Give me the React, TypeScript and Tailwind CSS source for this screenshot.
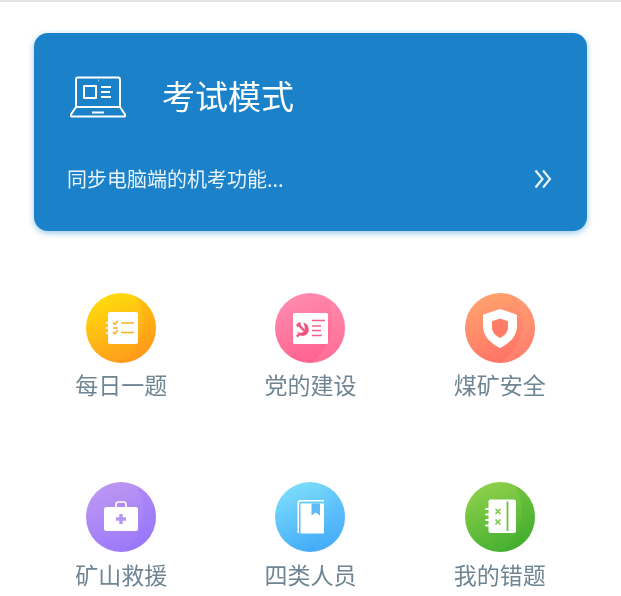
import type { ReactNode } from 'react'

const FONT = "font-['Noto_Sans_CJK_SC','Noto_Sans',sans-serif]"

function Disc({ id, from, to, sheen, children }: { id: string; from: string; to: string; sheen: string; children: ReactNode }) {
  return (
    <svg width="70" height="70" viewBox="0 0 70 70">
      <defs>
        <linearGradient id={id} x1="0.3" y1="0" x2="0.7" y2="1">
          <stop offset="0" stopColor={from} />
          <stop offset="1" stopColor={to} />
        </linearGradient>
      </defs>
      <circle cx="35" cy="35" r="35" fill={`url(#${id})`} />
      {/* the soft swoosh on the lower right of each disc */}
      <path d="M50 3.400A35 35 0 0 1 34 70C52 62 66 30 50 3.400Z" fill={sheen} opacity="0.2" />
      {children}
    </svg>
  )
}

const ITEMS: { label: string; icon: ReactNode }[] = [
  {
    label: '每日一题',
    icon: (
      <Disc id="d1" from="#FFDD0C" to="#FF981C" sheen="#FF8C12">
        <rect x="22" y="19" width="30" height="32" rx="2" fill="#fff" />
        <path d="M20 30h3M20 35h3M20 40h3" stroke="#fff" strokeWidth="1.500" />
        <g stroke="#FFB21A" strokeWidth="1.500" fill="none">
          <path d="M27 29.500l1.800 1.800 3-3.600M27 39l1.800 1.800 3-3.600" />
          <path d="M35 30h13M35 39.500h13M27 35h5" />
        </g>
      </Disc>
    ),
  },
  {
    label: '党的建设',
    icon: (
      <Disc id="d2" from="#FF8CB0" to="#FF5F8C" sheen="#FFA8C0">
        <rect x="18" y="20" width="35" height="31" rx="1.500" fill="#fff" />
        <path d="M37 27.500h13M37 33h9M37 37.500h9M37 42.500h10" stroke="#F4608A" strokeWidth="1.600" fill="none" />
        <g fill="#F0527C">
          {/* sickle */}
          <path d="M28 29.500c4.500 1 6.500 5.500 5.500 9-1 3.500-5 5.500-8.500 3.800l-2.300 2.200-1.700-1.700 2.300-2.300c-.7-.8-1-1.500-1.200-2.300 1.500 1.500 4 2.200 6 .8 2.500-1.800 2-6.500-.1-9.500Z" />
          {/* hammer */}
          <path d="M21 32l3.300-3 2 1.800-1 1 4.800 5.200-1.700 1.600-4.800-5.200-1 .9Z" />
        </g>
      </Disc>
    ),
  },
  {
    label: '煤矿安全',
    icon: (
      <Disc id="d3" from="#FFA36E" to="#FF6F66" sheen="#FFB98C">
        <path d="M35 16.500l16.500 5.500v11c0 10-7 17-16.500 21.500-9.500-4.500-16.500-11.500-16.500-21.500V22Z" fill="#fff" strokeLinejoin="round" stroke="#fff" strokeWidth="1" />
        <path d="M35 25.500l8 2.800v6c0 5-3.400 8.500-8 10.700-4.600-2.200-8-5.700-8-10.700v-6Z" fill="#FF7D68" />
      </Disc>
    ),
  },
  {
    label: '矿山救援',
    icon: (
      <Disc id="d4" from="#BD97F2" to="#9A78FA" sheen="#8E6CFF">
        <path d="M30 25v-2.500a2.500 2.500 0 0 1 2.500-2.500h5a2.500 2.500 0 0 1 2.500 2.500V25" fill="none" stroke="#fff" strokeWidth="1.600" />
        <rect x="18" y="25" width="34" height="24" rx="2.500" fill="#fff" />
        <path d="M35 32v10M30 37h10" stroke="#B496F5" strokeWidth="3.400" />
      </Disc>
    ),
  },
  {
    label: '四类人员',
    icon: (
      <Disc id="d5" from="#7EDDFB" to="#3FA8F8" sheen="#5DB8FA">
        <path d="M22.500 21a3 3 0 0 1 3-3H49v1.500H25.500a1.500 1.500 0 0 0-1.500 1.500V51h-1.500Z" fill="#fff" />
        <path d="M25.500 21.500H49V51.500H25.500Z" fill="#fff" />
        <path d="M36.500 21.500h8.500v12l-4.250-3-4.250 3Z" fill="#5DBBF8" />
      </Disc>
    ),
  },
  {
    label: '我的错题',
    icon: (
      <Disc id="d6" from="#8FD14C" to="#42AE2F" sheen="#3DA52A">
        <rect x="23.500" y="17.500" width="27.500" height="33.500" rx="2" fill="#fff" />
        <path d="M21 27h5M21 32.500h5M21 38h5M21 43.500h5" stroke="#fff" strokeWidth="1.800" strokeLinecap="round" />
        <path d="M42.500 19.500v29.500" stroke="#6CC03C" strokeWidth="1.800" />
        <path d="M30.500 27l5 5M35.500 27l-5 5M30.500 37.500l5 5M35.500 37.500l-5 5" stroke="#7CC84C" strokeWidth="1.700" />
      </Disc>
    ),
  },
]

export default function App() {
  return (
    <div className={`${FONT} h-[596px] w-[621px] overflow-hidden bg-white blur-[0.6px]`}>
      <div className="h-[2px] bg-[#e4e4e4]" />

      {/* Exam mode card */}
      <div className="mx-[34px] mt-[31px] h-[198px] rounded-[14px] bg-[#1b82ca] px-[33px] pt-[39px] text-white shadow-[0_2px_6px_rgba(27,130,202,0.45)]">
        <div className="flex h-[50px] items-center">
          <svg width="56" height="42" viewBox="0 0 56 42" fill="none" stroke="#fff" strokeWidth="2" className="ml-[3px]" strokeLinejoin="round">
            <path d="M6 31V3.500A2 2 0 0 1 8 1.500H48A2 2 0 0 1 50 3.500V31" />
            <path d="M6 31H50L55 38.500A1.200 1.200 0 0 1 54 40.500H2A1.200 1.200 0 0 1 1 38.500Z" />
            <rect x="14" y="10" width="12" height="12" />
            <path d="M31 11h10M31 16h9M31 21h10M22 36.500h12" />
            <path d="M28 4.500h.5" />
          </svg>
          <span className="ml-[36px] -translate-y-[2px] text-[33px] leading-none">考试模式</span>
        </div>
        <div className="mt-[43px] flex items-center justify-between">
          <span className="text-[20px] leading-[28px] text-[#e8f3fb]">同步电脑端的机考功能...</span>
          <svg width="18" height="20" viewBox="0 0 18 20" fill="none" stroke="#eaf4fb" strokeWidth="2.200" className="mr-[2px]">
            <path d="M1.500 1.500L8.500 10L1.500 18.500M9 1.500L16 10L9 18.500" />
          </svg>
        </div>
      </div>

      {/* Entry grid */}
      <div className="mt-[61.5px] grid grid-cols-3 px-[26.5px]">
        {ITEMS.map(item => (
          <div key={item.label} className="flex h-[189.5px] flex-col items-center">
            {item.icon}
            <span className="mt-[4.5px] text-[23px] leading-[34px] text-[#6f8593]">{item.label}</span>
          </div>
        ))}
      </div>
    </div>
  )
}
